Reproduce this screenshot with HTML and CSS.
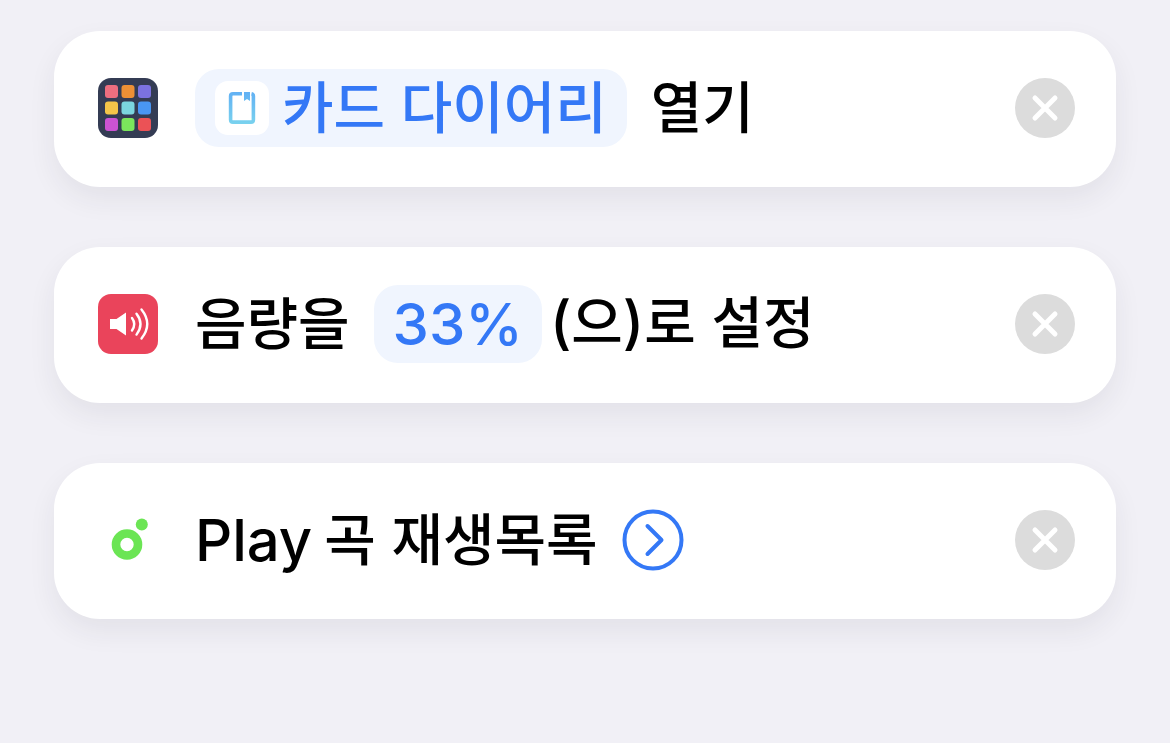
FILE: index.html
```html
<!DOCTYPE html>
<html lang="ko">
<head>
<meta charset="utf-8">
<meta name="viewport" content="width=device-width, initial-scale=1">
<title>단축어</title>
<link rel="stylesheet" href="styles.css">
</head>
<body>
<main class="actions">
  <article class="card">
    <svg class="app-icon" viewBox="0 0 60 60" aria-hidden="true">
      <rect width="60" height="60" rx="13" fill="#343c54"/>
      <rect x="7" y="7" width="13" height="13" rx="3" fill="#ed6e7f"/>
      <rect x="23.500" y="7" width="13" height="13" rx="3" fill="#ed9035"/>
      <rect x="40" y="7" width="13" height="13" rx="3" fill="#7b72e0"/>
      <rect x="7" y="23.500" width="13" height="13" rx="3" fill="#f5c549"/>
      <rect x="23.500" y="23.500" width="13" height="13" rx="3" fill="#7bd6df"/>
      <rect x="40" y="23.500" width="13" height="13" rx="3" fill="#4996f3"/>
      <rect x="7" y="40" width="13" height="13" rx="3" fill="#cb53d3"/>
      <rect x="23.500" y="40" width="13" height="13" rx="3" fill="#7be65c"/>
      <rect x="40" y="40" width="13" height="13" rx="3" fill="#eb5256"/>
    </svg>
    <p class="sentence">
      <button class="token token-app" type="button">
        <svg class="token-icon" viewBox="0 0 54 54" aria-hidden="true">
          <defs>
            <linearGradient id="diary" gradientUnits="userSpaceOnUse" x1="0" y1="11" x2="0" y2="43">
              <stop offset="0" stop-color="#62b1f4"/>
              <stop offset="1" stop-color="#79d2ee"/>
            </linearGradient>
          </defs>
          <rect width="54" height="54" rx="13" fill="#fff"/>
          <path d="M27 12.700H18q-2.400 0-2.400 2.400V38.700q0 2.400 2.400 2.400H36q2.400 0 2.400-2.400V15.100q0-2-1.900-2.400" fill="none" stroke="url(#diary)" stroke-width="3.600"/>
          <path d="M29 11h6v9l-3-2-3 2z" fill="url(#diary)"/>
        </svg>
        <span class="hangul">카드 다이어리</span>
      </button>
      <span class="hangul">열기</span>
    </p>
    <button class="remove" type="button" aria-label="카드 다이어리 열기 삭제">
      <svg viewBox="0 0 60 60" aria-hidden="true"><path d="M20 20 40 40M40 20 20 40"/></svg>
    </button>
  </article>

  <article class="card">
    <svg class="app-icon" viewBox="0 0 60 60" aria-hidden="true">
      <rect width="60" height="60" rx="13" fill="#ea445b"/>
      <path d="M12 25h6.500L28 18.500v23L18.500 35H12z" fill="#fff"/>
      <path d="M34 24q4.500 6 0 12.500M38.500 19.800q8 10.200 0 20.800M43.500 15.500q11.500 14.500 0 29" fill="none" stroke="#fff" stroke-width="2.400" stroke-linecap="round"/>
    </svg>
    <p class="sentence">
      <span class="hangul">음량을</span>
      <span class="value-group"><button class="token token-value latin" type="button">33%</button><span class="hangul"><span class="latin">(</span>으<span class="latin">)</span>로 설정</span></span>
    </p>
    <button class="remove" type="button" aria-label="음량 설정 삭제">
      <svg viewBox="0 0 60 60" aria-hidden="true"><path d="M20 20 40 40M40 20 20 40"/></svg>
    </button>
  </article>

  <article class="card">
    <svg class="app-icon" viewBox="0 0 60 60" aria-hidden="true">
      <circle cx="29" cy="34.500" r="11" fill="none" stroke="#6be554" stroke-width="8.600"/>
      <circle cx="43.800" cy="14.500" r="6" fill="#6be554"/>
    </svg>
    <p class="sentence">
      <span class="title-group"><span class="latin">Play</span> <span class="hangul">곡 재생목록</span></span>
      <button class="expand" type="button" aria-label="더 보기">
        <svg viewBox="0 0 62 62" aria-hidden="true"><circle cx="31" cy="31" r="28.500"/><path d="M25.500 17 39.500 31 25.500 45"/></svg>
      </button>
    </p>
    <button class="remove" type="button" aria-label="곡 재생목록 삭제">
      <svg viewBox="0 0 60 60" aria-hidden="true"><path d="M20 20 40 40M40 20 20 40"/></svg>
    </button>
  </article>
</main>
</body>
</html>
```
FILE: styles.css
```css
* {
  box-sizing: border-box;
}

body {
  margin: 0;
  min-height: 100vh;
  background: #f1f0f6;
  color: #000;
  font-family: "Noto Sans CJK KR", sans-serif;
  font-size: 56px;
  font-weight: 500;
  line-height: 70px;
}

button {
  margin: 0;
  padding: 0;
  border: 0;
  background: none;
  color: inherit;
  font: inherit;
  cursor: pointer;
}

svg {
  display: block;
  flex: none;
}

.actions {
  display: flex;
  flex-direction: column;
  gap: 60px;
  padding: 31px 54px;
}

.card {
  display: flex;
  align-items: center;
  min-height: 156px;
  padding: 36px 41px 38px 44px;
  border-radius: 46px;
  background: #fff;
  box-shadow: 0 12px 28px rgba(40, 36, 60, 0.07);
}

.app-icon {
  width: 60px;
  height: 60px;
}

.sentence {
  display: flex;
  flex: 1;
  flex-wrap: wrap;
  align-items: center;
  gap: 24px;
  margin: 0 0 0 37px;
}

.hangul {
  padding-bottom: 8px;
}

.latin {
  font-family: Inter, sans-serif;
  font-size: 58px;
}

.value-group {
  display: flex;
  align-items: center;
  gap: 8px;
}

.title-group {
  display: flex;
  align-items: center;
  gap: 12px;
}

.token {
  display: flex;
  align-items: center;
  height: 78px;
  border-radius: 24px;
  background: #f0f5fe;
  color: #3478f6;
}

.token-app {
  gap: 13px;
  padding: 0 20px;
}

.token-value {
  padding: 0 19px;
}

.token-icon {
  width: 54px;
  height: 54px;
}

.remove {
  width: 60px;
  height: 60px;
  border-radius: 50%;
  background: #dcdcdc;
}

.remove path {
  fill: none;
  stroke: #fff;
  stroke-width: 5;
  stroke-linecap: round;
}

.expand {
  width: 62px;
  height: 62px;
}

.expand svg {
  fill: none;
  stroke: #3478f6;
  stroke-width: 4;
  stroke-linecap: round;
  stroke-linejoin: round;
}
```
